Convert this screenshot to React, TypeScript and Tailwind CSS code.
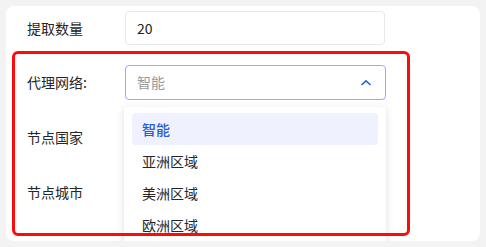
const options = ['智能', '亚洲区域', '美洲区域', '欧洲区域']

function Row({ label, children }: { label: string; children?: React.ReactNode }) {
  return (
    <div className="flex h-[35px] items-center">
      <div className="w-[98px] shrink-0 text-[14px] text-[#262626]">{label}</div>
      {children}
    </div>
  )
}

export default function App() {
  return (
    <div
      className="h-[247px] w-[486px] bg-[#f3f3f3] p-[6px]"
      style={{ fontFamily: '"Noto Sans CJK SC", "Noto Sans", sans-serif' }}
    >
      <div className="h-[235px] w-[474px] overflow-hidden rounded-lg bg-white">
        <div className="mt-[5px] flex h-[34px] items-center pl-[21px]">
          <div className="w-[98px] shrink-0 text-[14px] text-[#262626]">提取数量</div>
          <div className="flex h-[34px] w-[260px] items-center rounded border border-[#e8e8e8] px-[11px] text-[14px] text-[#222]">
            20
          </div>
        </div>

        <div className="relative ml-[6px] mt-[6px] w-[398px] pl-[15px] pt-[14px]">
          <div className="flex flex-col gap-[20px]">
            <Row label="代理网络:">
              <div className="relative">
                <div className="flex h-[35px] w-[261px] items-center justify-between rounded border border-[#8ab2f7] px-[11px] text-[14px] text-[#999]">
                  <span>智能</span>
                  <svg width="12" height="8" viewBox="0 0 12 8" className="mr-[2px]">
                    <polyline points="1.5,6 6,1.8 10.5,6" fill="none" stroke="#2f5fd8" strokeWidth="1.6" />
                  </svg>
                </div>
                <div className="absolute left-[-1px] top-[42px] w-[262px] rounded bg-white px-[8px] pb-[12px] pt-[6px] shadow-[0_2px_8px_rgba(0,0,0,0.13)]">
                  {options.map((o, i) => (
                    <div
                      key={o}
                      className={
                        i === 0
                          ? 'flex h-[32px] items-center rounded bg-[#eff1fe] px-[10px] text-[14px] font-medium text-[#2a5bd7]'
                          : 'flex h-[32px] items-center px-[10px] text-[14px] text-[#262626]'
                      }
                    >
                      {o}
                    </div>
                  ))}
                </div>
              </div>
            </Row>
            <Row label="节点国家" />
            <Row label="节点城市" />
          </div>
          <div className="h-[26px]" />
          <div className="pointer-events-none absolute inset-0 z-10 rounded-md border-[3px] border-[#ff0a0a]" />
        </div>
      </div>
    </div>
  )
}
